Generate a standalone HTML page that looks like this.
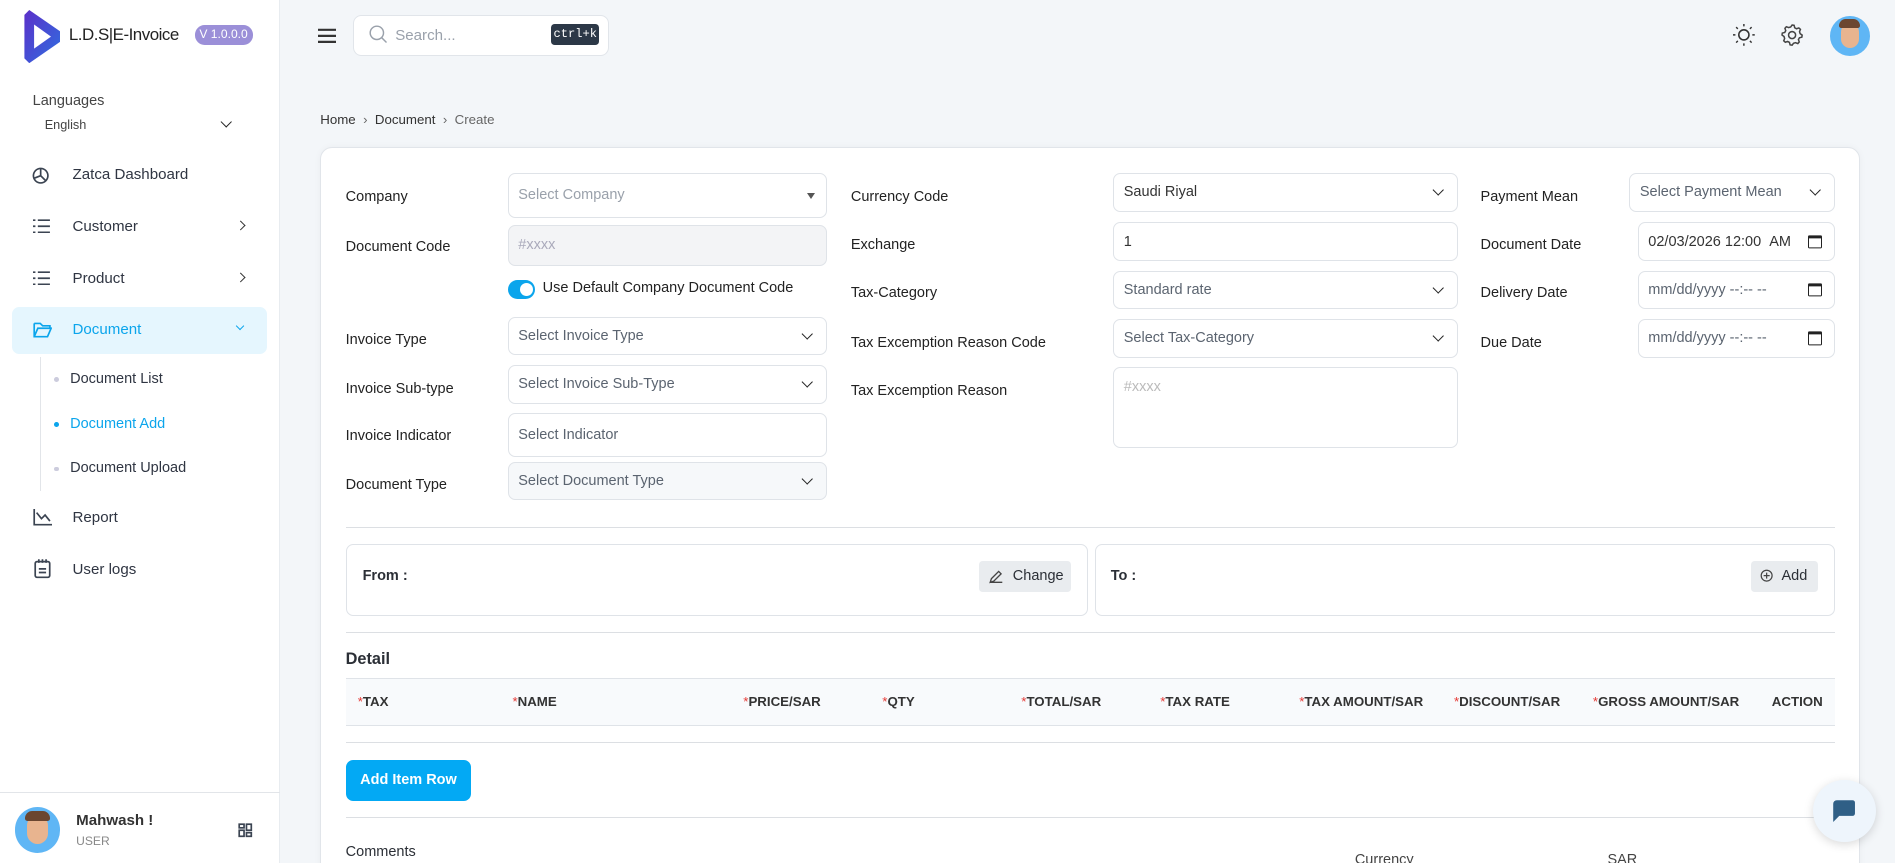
<!DOCTYPE html>
<html><head><meta charset="utf-8"><style>
*{box-sizing:border-box;margin:0;padding:0}
html,body{width:1895px;height:863px;overflow:hidden;background:#f3f6f9}
#w{zoom:1.2086;width:1568px;height:714px;position:relative;font-family:"Liberation Sans",sans-serif;color:#2b2f36;font-size:12px;overflow:hidden}
.a{position:absolute;white-space:nowrap}
.sb{left:0;top:0;width:232px;height:714px;background:#fff;border-right:1px solid #e8ecf0}
.mi{font-size:12.5px;color:#2f3542}
.ic{stroke:#3b4452;fill:none;stroke-width:1.4}
.inp{position:absolute;border:1px solid #dfe3e8;border-radius:6px;background:#fff;font-size:12px;color:#5b6470;padding-left:8px;display:flex;align-items:center}
.lbl{position:absolute;font-size:12px;color:#222}
.chev{position:absolute;right:12px;top:50%;width:7px;height:7px;border-right:1.6px solid #222;border-bottom:1.6px solid #222;transform:translateY(-70%) rotate(45deg)}
.hr{position:absolute;left:286px;width:1232px;height:1px;background:#dcdfe3}
.th{position:absolute;top:574px;font-size:11px;font-weight:bold;color:#333}
.th b{color:#e53935;font-weight:normal}
.cal{position:absolute;right:10px;top:50%;transform:translateY(-50%);width:11px;height:11px;border:1.5px solid #222;border-top-width:3px;border-radius:1px}
</style></head><body><div id="w">
<div class="a sb"></div>
<svg class="a" style="left:18px;top:8px" width="32" height="44" viewBox="0 0 32 44"><defs><linearGradient id="g" x1="0" y1="0" x2="1" y2="1"><stop offset="0" stop-color="#5b2fc9"/><stop offset="1" stop-color="#2f6fe0"/></linearGradient></defs><path d="M2 4 L6 0 L32 18 L32 26 L6 44 L2 40 Z" fill="url(#g)"/><path d="M10 12 L24 22 L10 32 Z" fill="#fff"/></svg>
<div class="a" style="left:57px;top:21px;font-size:14px;letter-spacing:-0.4px;color:#222">L.D.S|E-Invoice</div>
<div class="a" style="left:161px;top:21px;width:48px;height:16px;border-radius:8px;background:#9b8fd8;color:#fff;font-size:10px;text-align:center;line-height:16px">V 1.0.0.0</div>
<div class="a" style="left:27px;top:77px;font-size:12px;color:#444">Languages</div>
<div class="a" style="left:37px;top:98px;font-size:10.5px;color:#444">English</div>
<div class="a" style="left:184px;top:98px;width:7px;height:7px;border-right:1.6px solid #222;border-bottom:1.6px solid #222;transform:rotate(45deg)"></div>
<svg class="a" style="left:26px;top:137px" width="16" height="16"><circle cx="8" cy="8" r="6" class="ic"/><path d="M8 2v6l4 4M8 8l-5 2" class="ic"/></svg>
<div class="a mi" style="left:60px;top:137px">Zatca Dashboard</div>
<svg class="a" style="left:27px;top:181px" width="14" height="12"><path d="M0 1h2M0 6h2M0 11h2M4 1h10M4 6h10M4 11h10" class="ic"/></svg>
<div class="a mi" style="left:60px;top:180px">Customer</div>
<div class="a" style="left:196px;top:184px;width:6px;height:6px;border-right:1.4px solid #333;border-top:1.4px solid #333;transform:rotate(45deg)"></div>
<svg class="a" style="left:27px;top:224px" width="14" height="12"><path d="M0 1h2M0 6h2M0 11h2M4 1h10M4 6h10M4 11h10" class="ic"/></svg>
<div class="a mi" style="left:60px;top:223px">Product</div>
<div class="a" style="left:196px;top:227px;width:6px;height:6px;border-right:1.4px solid #333;border-top:1.4px solid #333;transform:rotate(45deg)"></div>
<div class="a" style="left:10px;top:254px;width:211px;height:39px;background:#e5f6fe;border-radius:6px"></div>
<svg class="a" style="left:27px;top:266px" width="16" height="14"><path d="M1 2h5l2 2h6v2M1 2v11h11l3-7H4L1 13" fill="none" stroke="#0ba5ec" stroke-width="1.4"/></svg>
<div class="a mi" style="left:60px;top:266px;color:#0ba5ec">Document</div>
<div class="a" style="left:196px;top:267px;width:5px;height:5px;border-right:1.3px solid #0ba5ec;border-bottom:1.3px solid #0ba5ec;transform:rotate(45deg)"></div>
<div class="a" style="left:33px;top:295px;width:1px;height:111px;background:#e2e5e9"></div>
<div class="a" style="left:45px;top:312px;width:4px;height:4px;border-radius:2px;background:#ccd"></div>
<div class="a" style="left:58px;top:307px;font-size:12px;color:#2f3542">Document List</div>
<div class="a" style="left:45px;top:349px;width:4px;height:4px;border-radius:2px;background:#0ba5ec"></div>
<div class="a" style="left:58px;top:344px;font-size:12px;color:#0ba5ec">Document Add</div>
<div class="a" style="left:45px;top:386px;width:4px;height:4px;border-radius:2px;background:#ccd"></div>
<div class="a" style="left:58px;top:381px;font-size:12px;color:#2f3542">Document Upload</div>
<svg class="a" style="left:27px;top:421px" width="16" height="14"><path d="M1 0v13h15M3 3l4 5 3-3 4 5" class="ic"/></svg>
<div class="a mi" style="left:60px;top:421px">Report</div>
<svg class="a" style="left:28px;top:462px" width="14" height="17"><rect x="1" y="3" width="12" height="13" rx="1.5" class="ic"/><path d="M4 1v3M7 1v3M10 1v3M4 9h6M4 12h6" class="ic"/></svg>
<div class="a mi" style="left:60px;top:464px">User logs</div>
<div class="a" style="left:0;top:655px;width:232px;height:1px;background:#e2e5e9"></div>
<div class="a" style="left:12px;top:668px;width:38px;height:38px;border-radius:50%;background:#5fb6f5;overflow:hidden"><div style="position:absolute;left:10px;top:6px;width:18px;height:24px;border-radius:9px;background:#e8b48f"></div><div style="position:absolute;left:9px;top:3px;width:20px;height:8px;border-radius:6px 6px 2px 2px;background:#6b4630"></div></div>
<div class="a" style="left:63px;top:672px;font-size:12.5px;font-weight:bold;color:#333">Mahwash !</div>
<div class="a" style="left:63px;top:690px;font-size:10px;color:#888">USER</div>
<svg class="a" style="left:197px;top:681px" width="12" height="12"><rect x="1" y="1" width="4" height="3" class="ic" stroke-width="1"/><rect x="1" y="6" width="4" height="5" class="ic" stroke-width="1"/><rect x="7" y="1" width="4" height="5" class="ic" stroke-width="1"/><rect x="7" y="8" width="4" height="3" class="ic" stroke-width="1"/></svg>

<svg class="a" style="left:263px;top:23px" width="15" height="13"><path d="M0 1.5h15M0 6.5h15M0 11.5h15" stroke="#333" stroke-width="1.8"/></svg>
<div class="a" style="left:292px;top:12px;width:212px;height:34px;background:#fff;border:1px solid #e1e5ea;border-radius:7px"></div>
<svg class="a" style="left:305px;top:21px" width="15" height="15"><circle cx="6.5" cy="6.5" r="5.5" fill="none" stroke="#9aa1ab" stroke-width="1.2"/><path d="M10.5 10.5l4 4" stroke="#9aa1ab" stroke-width="1.2"/></svg>
<div class="a" style="left:327px;top:22px;font-size:12.5px;color:#9aa1ab">Search...</div>
<div class="a" style="left:456px;top:20px;width:40px;height:17px;background:#2c3847;border-radius:3px;color:#fff;font-family:'Liberation Mono',monospace;font-size:10px;text-align:center;line-height:17px">ctrl+k</div>
<svg class="a" style="left:1434px;top:20px" width="18" height="18"><circle cx="9" cy="9" r="4.2" fill="none" stroke="#333" stroke-width="1.3"/><path d="M9 0v2M9 16v2M0 9h2M16 9h2M2.6 2.6l1.4 1.4M14 14l1.4 1.4M2.6 15.4L4 14M14 4l1.4-1.4" stroke="#333" stroke-width="1.2"/></svg>
<svg class="a" style="left:1473px;top:19px" width="20" height="20" viewBox="0 0 24 24"><path d="M12 2l2 .3.6 2.4 1.8 1 2.3-.8 1.6 1.4-.9 2.3.6 2 2 1.4-.3 2.1-2.4.6-1 1.8.8 2.3-1.4 1.6-2.3-.9-2 .6L12 22l-2-.3-.6-2.4-1.8-1-2.3.8-1.6-1.4.9-2.3-.6-2L2 12l.3-2 2.4-.6 1-1.8-.8-2.3 1.4-1.6 2.3.9 2-.6z" fill="none" stroke="#444" stroke-width="1.5"/><circle cx="12" cy="12" r="3.5" fill="none" stroke="#444" stroke-width="1.5"/></svg>
<div class="a" style="left:1514px;top:13px;width:33px;height:33px;border-radius:50%;background:#5fb6f5;overflow:hidden"><div style="position:absolute;left:9px;top:6px;width:15px;height:21px;border-radius:8px;background:#e8b48f"></div><div style="position:absolute;left:8px;top:3px;width:17px;height:7px;border-radius:6px 6px 2px 2px;background:#6b4630"></div></div>

<div class="a" style="left:265px;top:93px;font-size:11px;color:#333">Home &nbsp;<span style="color:#666">›</span>&nbsp; Document &nbsp;<span style="color:#666">›</span>&nbsp; <span style="color:#666">Create</span></div>

<div class="a" style="left:265px;top:122px;width:1274px;height:620px;background:#fff;border:1px solid #e1e5ea;border-radius:10px;box-shadow:0 0 6px rgba(0,0,0,.04)"></div>

<div class="lbl" style="left:286px;top:156px">Company</div>
<div class="inp" style="left:420px;top:143px;width:264px;height:37px;color:#9aa1ab">Select Company<div style="position:absolute;right:9px;top:16px;border:4px solid transparent;border-top:5px solid #555"></div></div>
<div class="lbl" style="left:286px;top:198px">Document Code</div>
<div class="inp" style="left:420px;top:186px;width:264px;height:34px;background:#f3f4f6;color:#aab">#xxxx</div>
<div class="a" style="left:420px;top:232px;width:23px;height:15px;border-radius:8px;background:#0ba5ec"><div style="position:absolute;right:2px;top:2px;width:11px;height:11px;border-radius:50%;background:#fff"></div></div>
<div class="a" style="left:449px;top:232px;font-size:12px;color:#222">Use Default Company Document Code</div>
<div class="lbl" style="left:286px;top:275px">Invoice Type</div>
<div class="inp" style="left:420px;top:262px;width:264px;height:32px">Select Invoice Type<i class="chev"></i></div>
<div class="lbl" style="left:286px;top:315px">Invoice Sub-type</div>
<div class="inp" style="left:420px;top:302px;width:264px;height:32px">Select Invoice Sub-Type<i class="chev"></i></div>
<div class="lbl" style="left:286px;top:354px">Invoice Indicator</div>
<div class="inp" style="left:420px;top:342px;width:264px;height:36px">Select Indicator</div>
<div class="lbl" style="left:286px;top:395px">Document Type</div>
<div class="inp" style="left:420px;top:382px;width:264px;height:32px;background:#f6f8fa">Select Document Type<i class="chev"></i></div>

<div class="lbl" style="left:704px;top:156px">Currency Code</div>
<div class="inp" style="left:921px;top:143px;width:285px;height:32px;color:#333">Saudi Riyal<i class="chev"></i></div>
<div class="lbl" style="left:704px;top:196px">Exchange</div>
<div class="inp" style="left:921px;top:184px;width:285px;height:32px;color:#333">1</div>
<div class="lbl" style="left:704px;top:236px">Tax-Category</div>
<div class="inp" style="left:921px;top:224px;width:285px;height:32px">Standard rate<i class="chev"></i></div>
<div class="lbl" style="left:704px;top:277px">Tax Excemption Reason Code</div>
<div class="inp" style="left:921px;top:264px;width:285px;height:32px">Select Tax-Category<i class="chev"></i></div>
<div class="lbl" style="left:704px;top:317px">Tax Excemption Reason</div>
<div class="inp" style="left:921px;top:304px;width:285px;height:67px;align-items:flex-start;padding-top:9px;color:#bbb">#xxxx</div>

<div class="lbl" style="left:1225px;top:156px">Payment Mean</div>
<div class="inp" style="left:1348px;top:143px;width:170px;height:32px">Select Payment Mean<i class="chev"></i></div>
<div class="lbl" style="left:1225px;top:196px">Document Date</div>
<div class="inp" style="left:1355px;top:184px;width:163px;height:32px;color:#333">02/03/2026 12:00 &nbsp;AM<i class="cal"></i></div>
<div class="lbl" style="left:1225px;top:236px">Delivery Date</div>
<div class="inp" style="left:1355px;top:224px;width:163px;height:32px">mm/dd/yyyy --:-- --<i class="cal"></i></div>
<div class="lbl" style="left:1225px;top:277px">Due Date</div>
<div class="inp" style="left:1355px;top:264px;width:163px;height:32px">mm/dd/yyyy --:-- --<i class="cal"></i></div>

<div class="hr" style="top:436px"></div>
<div class="a" style="left:286px;top:450px;width:614px;height:60px;border:1px solid #dfe3e8;border-radius:6px"></div>
<div class="a" style="left:300px;top:470px;font-size:12px;font-weight:bold">From :</div>
<div class="a" style="left:810px;top:464px;width:76px;height:26px;background:#e9ecef;border-radius:3px;font-size:12px;line-height:26px;padding-left:28px">Change</div>
<svg class="a" style="left:818px;top:471px" width="12" height="12"><path d="M1 11l1-3 6-6 2 2-6 6zM1 11h10" fill="none" stroke="#444" stroke-width="1.1"/></svg>
<div class="a" style="left:906px;top:450px;width:612px;height:60px;border:1px solid #dfe3e8;border-radius:6px"></div>
<div class="a" style="left:919px;top:470px;font-size:12px;font-weight:bold">To :</div>
<div class="a" style="left:1449px;top:464px;width:55px;height:26px;background:#e9ecef;border-radius:3px;font-size:12px;line-height:26px;padding-left:25px">Add</div>
<svg class="a" style="left:1456px;top:471px" width="11" height="11"><circle cx="5.5" cy="5.5" r="4.5" fill="none" stroke="#444"/><path d="M5.5 3v5M3 5.5h5" stroke="#444"/></svg>
<div class="hr" style="top:523px"></div>
<div class="a" style="left:286px;top:538px;font-size:13.5px;font-weight:bold">Detail</div>
<div class="a" style="left:286px;top:561px;width:1232px;height:40px;background:#f8fafc;border-top:1px solid #dfe3e8;border-bottom:1px solid #dfe3e8"></div>
<div class="th" style="left:296px"><b>*</b>TAX</div>
<div class="th" style="left:424px"><b>*</b>NAME</div>
<div class="th" style="left:615px"><b>*</b>PRICE/SAR</div>
<div class="th" style="left:730px"><b>*</b>QTY</div>
<div class="th" style="left:845px"><b>*</b>TOTAL/SAR</div>
<div class="th" style="left:960px"><b>*</b>TAX RATE</div>
<div class="th" style="left:1075px"><b>*</b>TAX AMOUNT/SAR</div>
<div class="th" style="left:1203px"><b>*</b>DISCOUNT/SAR</div>
<div class="th" style="left:1318px"><b>*</b>GROSS AMOUNT/SAR</div>
<div class="th" style="left:1466px">ACTION</div>
<div class="hr" style="top:614px"></div>
<div class="a" style="left:286px;top:629px;width:104px;height:34px;background:#03a9f4;border-radius:6px;color:#fff;font-size:12px;font-weight:bold;text-align:center;line-height:34px">Add Item Row</div>
<div class="hr" style="top:676px"></div>
<div class="a" style="left:286px;top:698px;font-size:12px">Comments</div>
<div class="a" style="left:1121px;top:705px;font-size:12px;color:#444">Currency</div>
<div class="a" style="left:1330px;top:705px;font-size:12px;color:#444">SAR</div>
<div class="a" style="left:1500px;top:645px;width:52px;height:52px;border-radius:50%;background:#eef5fc;box-shadow:0 2px 8px rgba(0,0,0,.15)"></div>
<svg class="a" style="left:1516px;top:661px" width="20" height="20"><path d="M4 1h13a2 2 0 0 1 2 2v9a2 2 0 0 1-2 2H6l-5 5V4a3 3 0 0 1 3-3z" fill="#2f5f86"/></svg>
</div></body></html>
